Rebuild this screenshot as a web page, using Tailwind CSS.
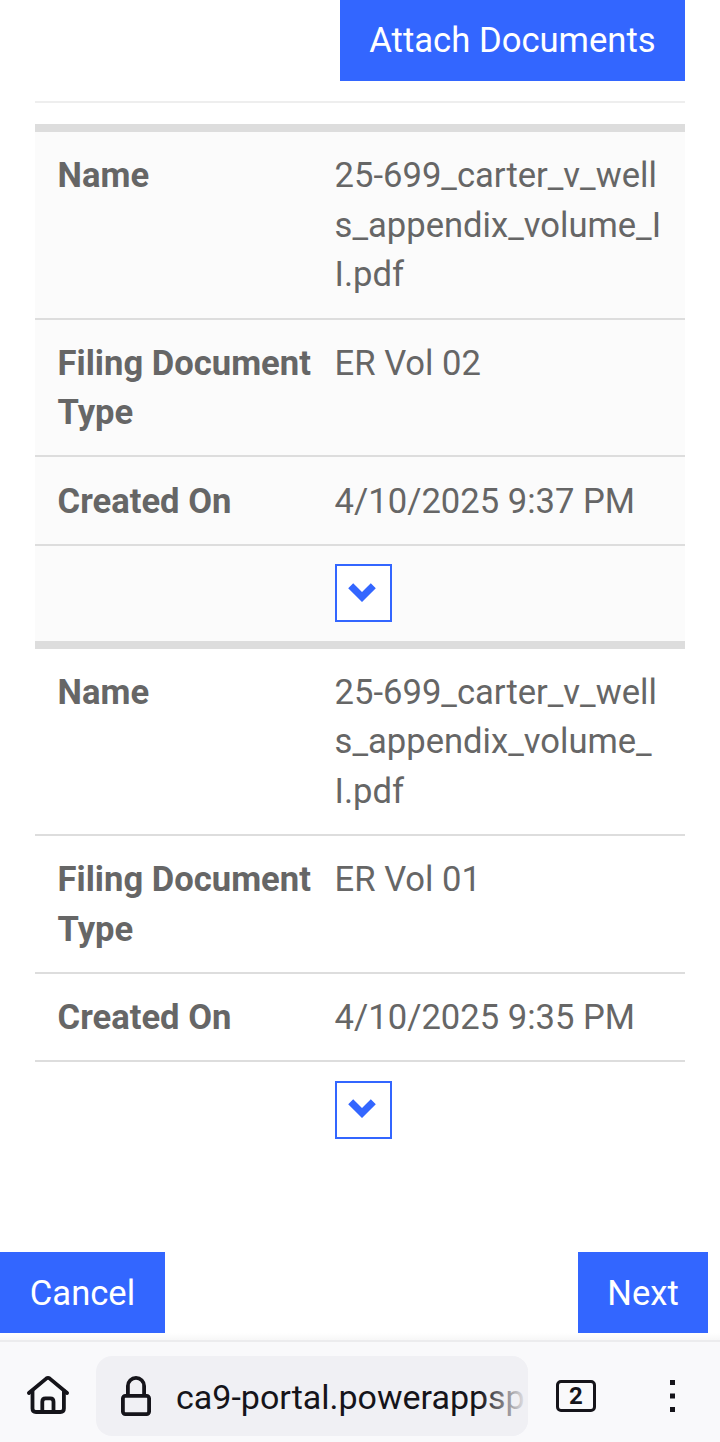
<!DOCTYPE html>
<html lang="en">
	<head>
		<meta charset="UTF-8" />
		<meta name="viewport" content="width=device-width, initial-scale=1.0" />
		<title>Attach Documents</title>
		<script src="https://cdn.jsdelivr.net/npm/@tailwindcss/browser@4"></script>
	</head>
	<body class="bg-white font-[Roboto,sans-serif] text-[34.6px] leading-[49.4px] text-[#666666]">
		<div class="flex flex-col h-[1442px] overflow-hidden">
			<main class="px-[35px] h-[1252px] shrink-0">
				<div class="flex justify-end">
					<button class="w-[345px] h-[81px] bg-[#3366ff] text-white text-[34.65px]">Attach Documents</button>
				</div>
				<div class="mt-5 border-t-2 border-[#eeeeee]"></div>

				<!-- documents -->
				<div class="mt-[21px]">
					<div class="border-t-8 border-[#dddddd] bg-[#fbfbfb]">
						<div class="flex h-[188px] border-b-2 border-[#dddddd] pl-[22.6px] pt-[19.2px]">
							<div class="w-[277px] shrink-0 font-bold">Name</div>
							<div>25-699_carter_v_well<br />s_appendix_volume_I<br />I.pdf</div>
						</div>
						<div class="flex h-[137px] border-b-2 border-[#dddddd] pl-[22.6px] pt-[19px]">
							<div class="w-[277px] shrink-0 font-bold">Filing Document Type</div>
							<div>ER Vol 02</div>
						</div>
						<div class="flex h-[89px] border-b-2 border-[#dddddd] pl-[22.6px] pt-[20px]">
							<div class="w-[277px] shrink-0 font-bold">Created On</div>
							<div>4/10/2025 9:37 PM</div>
						</div>
						<div class="h-[95px] pl-[300px] pt-[18px]">
							<button class="block w-[57px] h-[58px] border-2 border-[#3366ff] bg-white">
								<svg class="block w-[53px] h-[54px]" viewBox="337 566 53 54" fill="#3366ff">
									<path d="M348.2 588.2 353.2 583.2 362 592 370.8 583.2 375.8 588.2 362 602z" />
								</svg>
							</button>
						</div>
					</div>
					<div class="border-t-8 border-[#dddddd]">
						<div class="flex h-[187px] border-b-2 border-[#dddddd] pl-[22.6px] pt-[19px]">
							<div class="w-[277px] shrink-0 font-bold">Name</div>
							<div>25-699_carter_v_well<br />s_appendix_volume_<br />I.pdf</div>
						</div>
						<div class="flex h-[138px] border-b-2 border-[#dddddd] pl-[22.6px] pt-[19.2px]">
							<div class="w-[277px] shrink-0 font-bold">Filing Document Type</div>
							<div>ER Vol 01</div>
						</div>
						<div class="flex h-[88px] border-b-2 border-[#dddddd] pl-[22.6px] pt-[19px]">
							<div class="w-[277px] shrink-0 font-bold">Created On</div>
							<div>4/10/2025 9:35 PM</div>
						</div>
						<div class="pl-[300px] pt-[19px]">
							<button class="block w-[57px] h-[58px] border-2 border-[#3366ff] bg-white">
								<svg class="block w-[53px] h-[54px]" viewBox="337 566 53 54" fill="#3366ff">
									<path d="M348.2 587.2 353.2 582.2 362 591 370.8 582.2 375.8 587.2 362 601z" />
								</svg>
							</button>
						</div>
					</div>
				</div>
			</main>

			<div class="flex justify-between pr-3 h-[88px] shrink-0 bg-linear-to-b from-white from-92% to-[#f7f7f7]">
				<button class="w-[165px] h-[81px] pt-0.5 bg-[#3366ff] text-white">Cancel</button>
				<button class="w-[130px] h-[81px] pt-0.5 bg-[#3366ff] text-white">Next</button>
			</div>

			<!-- browser toolbar -->
			<footer class="flex h-[102px] shrink-0 border-t-2 border-[#ececee] bg-[#f9f9fb] pt-[14px] text-[#15141a]">
				<svg class="w-24 h-20" viewBox="0 1356 96 80" fill="none" stroke="#15141a" stroke-width="3.8" stroke-linecap="round" stroke-linejoin="round">
					<path d="M28.9 1393 46.2 1378.6Q48 1377.2 49.8 1378.6L67.1 1393" />
					<path d="M32.5 1391V1408.5Q32.5 1412 36 1412H60.4Q63.9 1412 63.9 1408.5V1391" />
					<path d="M42.3 1411V1401.8Q42.3 1398.3 45.5 1398.3H50.3Q53.5 1398.3 53.5 1401.8V1411" />
				</svg>
				<div class="relative flex items-center w-[432px] h-20 rounded-2xl bg-[#f0f0f4] overflow-hidden">
					<svg class="w-20 h-20 shrink-0" viewBox="96 1356 80 80" fill="none" stroke="#15141a" stroke-width="3.8">
						<rect x="122.9" y="1395.9" width="26.2" height="18.2" rx="2.5" />
						<path d="M127.9 1395V1386A8.1 8.1 0 0 1 144.1 1386V1395" />
					</svg>
					<span class="whitespace-nowrap pt-[3px] text-[34px]">ca9-portal.powerappsp</span>
					<div class="absolute right-0 top-0 w-12 h-20 bg-linear-to-r from-[#f0f0f4]/0 to-[#f0f0f4]"></div>
				</div>
				<div class="flex items-center justify-center ml-7 mt-6 w-10 h-8 rounded-[5px] border-3 border-[#15141a] text-[24px] leading-none font-bold">2</div>
				<svg class="ml-[68px] w-4 h-20" viewBox="664 1356 16 80" fill="#15141a">
					<rect x="670" y="1380" width="5" height="5" />
					<rect x="670" y="1393.5" width="5" height="5" />
					<rect x="670" y="1407" width="5" height="5" />
				</svg>
			</footer>
		</div>
	</body>
</html>
